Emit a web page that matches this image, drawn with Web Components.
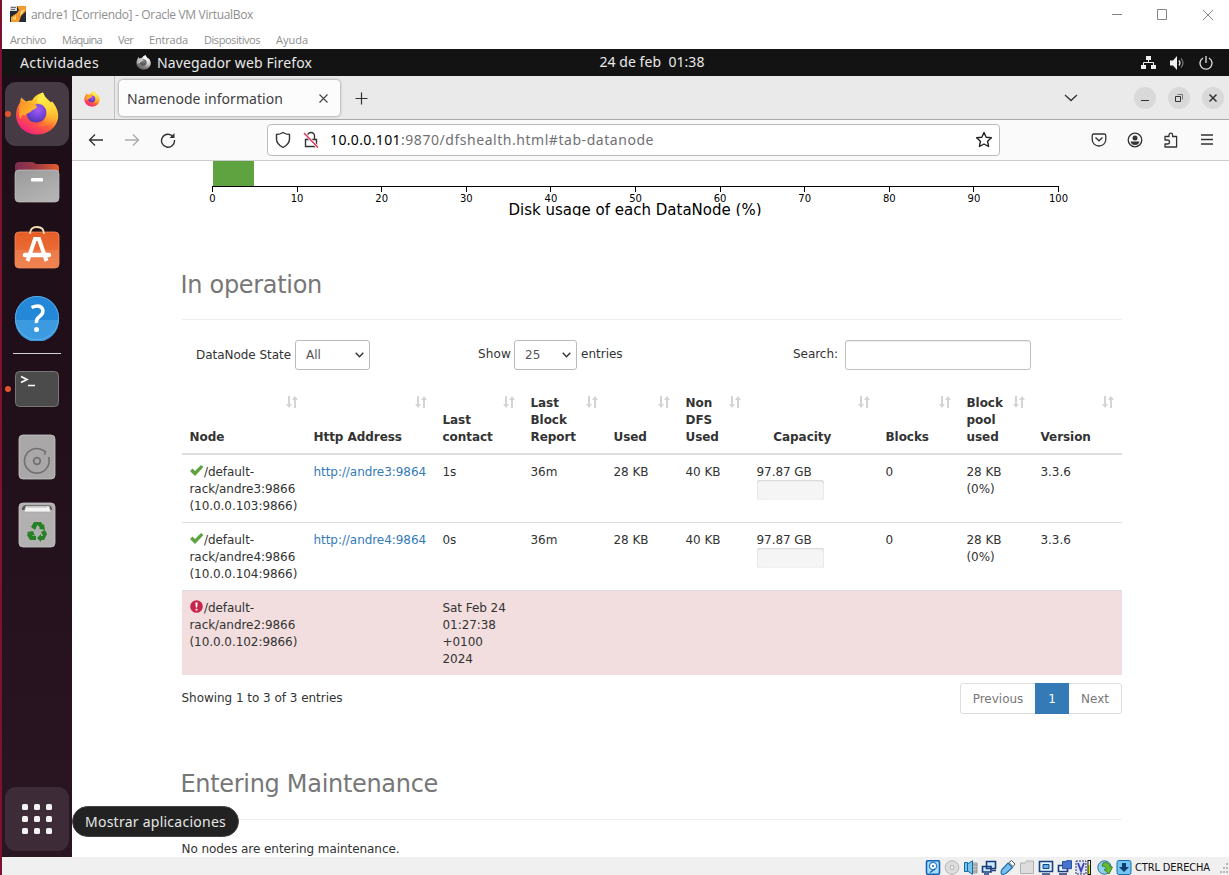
<!DOCTYPE html>
<html lang="es">
<head>
<meta charset="utf-8">
<title>andre1 [Corriendo] - Oracle VM VirtualBox</title>
<style>
html,body{margin:0;height:100%;overflow:hidden}
body{font-family:"Noto Sans",sans-serif;background:#fff}
</style>
</head>
<body>
<vm-window></vm-window>
<script>
const define = (tag, css, html, setup) => customElements.define(tag, class extends HTMLElement {
  connectedCallback() {
    if (this.shadowRoot) return;
    const root = this.attachShadow({mode: "open"});
    const t = document.createElement("template");
    t.innerHTML = `<style>:host,*{box-sizing:border-box}svg{display:block;flex:none}${css}</style>${typeof html === "function" ? html(this) : html}`;
    root.append(document.importNode(t.content, true));
    if (setup) setup(this, root);
  }
});

/* Text whose tracking is tuned to a given advance width */
define("fit-text", `:host{display:inline-block;white-space:pre;letter-spacing:0}span{display:inline-block}`, `<span><slot></slot></span>`, (el, root) => {
  const w = parseFloat(el.getAttribute("w"));
  const now = root.querySelector("span").getBoundingClientRect().width;
  if (w && now) el.style.letterSpacing = ((w - now) / el.textContent.length).toFixed(3) + "px";
  if (w) el.style.width = w + "px";
});

define("firefox-logo", `:host{display:block;flex:none}:host([mono]){filter:grayscale(1) brightness(1.1)}svg{width:100%;height:100%}`, `
<svg viewBox="0 0 44 44">
<defs>
<linearGradient id="a" x1=".8" y1=".1" x2=".25" y2=".95"><stop offset="0" stop-color="#fff04a"/><stop offset=".35" stop-color="#ffb52b"/><stop offset=".62" stop-color="#ff5f38"/><stop offset="1" stop-color="#f5227e"/></linearGradient>
<radialGradient id="b" cx=".55" cy=".3" r=".75"><stop offset="0" stop-color="#a65cf2"/><stop offset=".6" stop-color="#7042d8"/><stop offset="1" stop-color="#4a34a8"/></radialGradient>
<linearGradient id="c" x1=".5" y1="0" x2=".6" y2="1"><stop offset="0" stop-color="#fff44f"/><stop offset=".5" stop-color="#ffd53a"/><stop offset="1" stop-color="#ff9a2c" stop-opacity=".2"/></linearGradient>
<linearGradient id="d" x1="0" y1="0" x2="1" y2=".6"><stop offset="0" stop-color="#ff8a24"/><stop offset="1" stop-color="#ffbf30"/></linearGradient>
</defs>
<path fill="url(#a)" d="M28 1c1 4 5 7 8 10l1-1c4 5 7 10 6 17-2 10-11 16-21 16C10 43 1 34 1 23c0-5 2-9 4-12l1-5 5 4c2-1 4-1 6-1 3-5 7-7 11-8z"/>
<path fill="url(#b)" d="M12 21c2-6 9-10 14-8 5 1 6 5 5 11-2 5-6 7-10 7-6 0-10-5-9-10z"/>
<path fill="url(#c)" d="M28 1c-4 3-6 7-6 10 5 1 9 5 10 10 0 8-5 12-10 13 10 3 19-4 20-12 0-5-2-9-5-12l-1 2C33 9 29 5 28 1z"/>
<path fill="url(#d)" d="M6 6c0 3 0 5 2 6 3-2 6-1 8 1 2 0 5 0 6 2-1 3-5 3-6 5-2 2-4 1-6 4-3-2-4 1-4 4-3-3-3-12 0-17z"/>
</svg>`);

define("win-title", `:host{display:flex;height:29px;align-items:center;padding:0 14px 0 7px;color:#8e8e8e;font:12px/16px "Open Sans",sans-serif}
.t{margin-left:4px}.c{margin-left:auto}`, `
<svg width="18" height="17"><rect x="1" width="16" height="16" fill="#252a36"/><path d="M8 0h9v5l-5 5-2 6H2v-5l6-4 2-3z" fill="#f59b2e"/><path d="m12 5 4-2-5 7z" fill="#ffe08a"/><path d="M7 9 3 13l4 1z" fill="#ffd06b"/><rect x="1" y="0" width="7" height="5" fill="#d8dadd"/><path d="M2 1.500h5M2 3.500h4" stroke="#69707c"/></svg>
<fit-text class="t" w="222">andre1 [Corriendo] - Oracle VM VirtualBox</fit-text>
<svg class="c" width="104" height="14" fill="none" stroke="#858585"><path d="M1 6.500h10M46.500 1.500h9v10h-9zM92 2l10 10M102 2 92 12"/></svg>`);

define("win-menu", `:host{display:flex;height:20px;align-items:center;padding:0 0 0 8px;gap:16px;color:#8e8e8e;font:11px/15px "Open Sans",sans-serif}`, `
<fit-text w="36">Archivo</fit-text><fit-text w="40">Máquina</fit-text><fit-text w="15">Ver</fit-text><fit-text w="39">Entrada</fit-text><fit-text w="56">Dispositivos</fit-text><fit-text w="32">Ayuda</fit-text>`);

define("gnome-bar", `:host{display:grid;grid-template-columns:1fr 104px 1fr;height:27px;align-items:center;background:#131313;color:#e9e9e9;font:14px/20px "Noto Sans",sans-serif;padding:0 16px 0 18px}
div{display:flex;align-items:center}.l{width:300px}.l firefox-logo{width:15px;height:15px;margin:0 6px 0 37px}.r{justify-content:flex-end;gap:14px}.mid{margin-left:35px;flex:none}:host{grid-template-columns:minmax(0,1fr) 104px minmax(0,1fr)}.l,.mid{margin-top:-1px}.l{margin-top:0}`, `
<div class="l"><fit-text w="79">Actividades</fit-text><firefox-logo mono></firefox-logo><fit-text w="155">Navegador web Firefox</fit-text></div>
<div><fit-text class="mid" style="margin-left:0" w="105">24 de feb  01:38</fit-text></div>
<div class="r">
<svg width="15" height="14" fill="#eee"><path d="M5 0h5v4H5zM0 9h5v4H0zM10 9h5v4h-5z"/><path d="M7.500 4v3M2.500 9V6.500h10V9" fill="none" stroke="#eee"/></svg>
<svg width="15" height="14"><path fill="#eee" d="M0 4.500h3L7 0v14L3 9.500H0z"/><path d="M9 4.500q2 2.500 0 5" fill="none" stroke="#ddd" stroke-width="1.300"/><path d="M11 2.500q4 4.500 0 9" fill="none" stroke="#777" stroke-width="1.200"/></svg>
<svg width="14" height="14" fill="none" stroke="#e3e3e3" stroke-width="1.300"><path d="M4 2a6 6 0 1 0 6 0M7 0v7"/></svg></div>`, (el, root) => {
  root.querySelector(".mid").style.marginLeft = "35px";
});

define("dock-item", `:host{display:flex;width:64px;height:64px;flex:none;align-items:center;justify-content:center;position:relative;border-radius:11px}
:host([active]){background:#463b44}:host([apps]){background:#3e2b38}
i{position:absolute;left:0;top:29px;width:6px;height:6px;border-radius:3px;background:#e2552a}:host(:not([running])) i{display:none}`, `<i></i><slot></slot>`);

define("gnome-dock", `:host{display:flex;flex-direction:column;align-items:center;width:70px;flex:none;padding:6px 0;gap:4px;background:linear-gradient(#1c0e16,#210f1a 45%,#26131f 75%,#2a1622)}
hr{width:48px;height:1px;border:0;background:#d5d0d3;margin:-1px 0}firefox-logo{width:44px;height:45px;margin-bottom:2px}.apps{margin-top:auto}.bag{margin-bottom:6px}`, `
<dock-item active running><firefox-logo></firefox-logo></dock-item>
<dock-item><svg width="46" height="42" viewBox="0 0 46 42"><defs><linearGradient id="f"><stop stop-color="#7b2d51"/><stop offset=".5" stop-color="#a13a43"/><stop offset="1" stop-color="#e65f2b"/></linearGradient><linearGradient id="g" x2=".6" y2="1"><stop stop-color="#9a9a9a"/><stop offset="1" stop-color="#b3b3b3"/></linearGradient></defs><path fill="url(#f)" d="M1 5q0-4 4-4h13q2 0 4 2h19q4 0 4 4v8H1z"/><rect x="1" y="9" width="44" height="32" rx="4" fill="url(#g)" stroke="#c2c2c2" stroke-width=".7"/><rect x="17" y="17" width="12" height="3.500" rx="1" fill="#fff"/></svg></dock-item>
<dock-item><svg class="bag" width="46" height="44" viewBox="0 0 46 44"><defs><linearGradient id="s" y2="1" x2="0"><stop stop-color="#e75e27"/><stop offset=".5" stop-color="#ea6b34"/><stop offset=".5" stop-color="#ed7a48"/><stop offset="1" stop-color="#ee8452"/></linearGradient></defs><rect x="1" y="7" width="44" height="36" rx="4" fill="url(#s)" stroke="#f38b5e" stroke-width=".8"/><path d="M16 9q0-7 7-7t7 7" fill="none" stroke="#f7ddb7" stroke-width="1.800"/><path d="m13.500 36 7.500-22h4l7.500 22" fill="none" stroke="#fff" stroke-width="4"/><path d="M11 30h24" stroke="#fff" stroke-width="4.500" stroke-linecap="round"/></svg></dock-item>
<dock-item><svg width="46" height="46" viewBox="0 0 46 46"><circle cx="23" cy="23" r="22" fill="#2587d8"/><path d="M1 25a22 22 0 0 0 44 0z" fill="#3c9be0"/><circle cx="23" cy="23" r="21.600" fill="none" stroke="#66b4ea" stroke-width=".8"/><path d="M17.500 12.500q10-4 11.500 3 0 4-4 6.500-3 2-2.500 6" fill="none" stroke="#fff" stroke-width="3.400"/><circle cx="22.500" cy="34.500" r="2.500" fill="#fff"/></svg></dock-item>
<hr>
<dock-item running><svg width="46" height="38" viewBox="0 0 46 38"><rect x="1.500" y="1.500" width="43" height="35" rx="4" fill="#4b4b4b" stroke="#777"/><path d="m7 6.500 6 3-6 3M14 15.500h7" fill="none" stroke="#fff" stroke-width="1.700"/></svg></dock-item>
<dock-item><svg width="38" height="46" viewBox="0 0 38 46"><rect x="1" y="1" width="36" height="44" rx="4" fill="#aaa7a8" stroke="#c8c6c7" stroke-width=".8"/><path d="M30.500 23A12.300 12.300 0 1 1 25 16.200l2.500 1.500-1 3" fill="none" stroke="#737072" stroke-width="1.600"/><circle cx="19" cy="27" r="3.300" fill="none" stroke="#737072" stroke-width="1.800"/></svg></dock-item>
<dock-item><svg width="38" height="46" viewBox="0 0 38 46"><rect x="1" y="1" width="36" height="44" rx="4" fill="#b3b0b1" stroke="#c8c6c7" stroke-width=".8"/><path d="M4 8q0-5 5-5h20q5 0 5 5z" fill="#555"/><path d="m6 10 2-6h23l2 6zM9 5h20" fill="#f3f3f3" stroke="#aaa" stroke-width=".8"/><g fill="#268026"><path d="m13 25 3-5h5l-4 8z"/><path d="m21 20 2 0 2 3 1-1 1 6-6-1 1-1-3-4z"/><path d="m23 30 4-2 2 4-3 6h-3v2l-4-4 4-4v2h2z"/><path d="M18 38h-6l-3-5 1-2-1-1 6-1 2 5-2-1-1 1h4z"/></g></svg></dock-item>
<dock-item apps class="apps"><svg width="30" height="30" fill="#f4f1f3"><g id="r"><rect width="6" height="6" rx="1.500"/><rect x="12" width="6" height="6" rx="1.500"/><rect x="24" width="6" height="6" rx="1.500"/></g><use href="#r" y="12"/><use href="#r" y="24"/></svg></dock-item>`);

define("ff-tabs", `:host{display:flex;height:44px;align-items:center;background:#eaeaea;border-bottom:1px solid #a9a9a9;color:#3e3e42;font:14px/20px "Noto Sans",sans-serif}
.pin{width:43px;height:43px;border-right:1px solid #c2c2c2;display:flex;align-items:center;padding:2px 0 0 12px}.pin firefox-logo{width:16px;height:16px}
.tab{width:221px;height:36px;margin:1px 0 0 4px;border-radius:4px;background:#fcfcfc;box-shadow:0 0 3px rgba(0,0,0,.45);display:flex;align-items:center;justify-content:space-between;padding:1px 12px 0 8px}
.plus{margin:2px 0 0 15px}.ch{margin:0 56px 0 auto}.w{display:flex;gap:12px;margin:1px 5px 0 0}.w svg{border-radius:11px;background:#d9d9d9}`, `
<div class="pin"><firefox-logo></firefox-logo></div>
<div class="tab"><fit-text w="156">Namenode information</fit-text><svg width="9" height="9" stroke="#444" stroke-width="1.100"><path d="m.5.5 8 8M8.500.5l-8 8"/></svg></div>
<svg class="plus" width="13" height="13" stroke="#333" stroke-width="1.200"><path d="M6.500.5v12M.5 6.500h12"/></svg>
<svg class="ch" width="14" height="8" fill="none" stroke="#333" stroke-width="1.300"><path d="m1 1 6 5.500L13 1"/></svg>
<div class="w"><svg width="22" height="22" stroke="#333"><path d="M7 13.500h8"/></svg><svg width="22" height="22" fill="none" stroke="#333"><path d="M7.500 9.500h5v5h-5z"/><path d="M9.500 7.500h5v5" stroke="#777"/></svg><svg width="22" height="22" stroke="#333" stroke-width="1.500"><path d="m7.500 7.500 7 7m0-7-7 7"/></svg></div>`);

define("ff-toolbar", `:host{display:flex;height:41px;align-items:center;background:#fafafa;border-bottom:1px solid #ccc;padding:0 14px 0 16px;color:#000;font:14px/20px "Noto Sans",sans-serif}
.nav{display:flex;gap:20px;width:179px}.url{width:733px;height:32px;border:1px solid #bcbcbc;border-radius:4px;background:#fff;display:flex;align-items:center;padding:0 6px 0 7px}
.lock{margin:0 11px 0 12px}.g{color:#707074}.star{margin-left:auto}.r{display:flex;gap:20px;margin-left:auto}`, `
<div class="nav">
<svg width="16" height="16" fill="none" stroke="#333" stroke-width="1.300"><path d="M15 8H1.500M7 2.500 1.500 8 7 13.500"/></svg>
<svg width="16" height="16" fill="none" stroke="#aaa" stroke-width="1.300"><path d="M1 8h13.500M9 2.500 14.500 8 9 13.500"/></svg>
<svg width="16" height="16" fill="none" stroke="#333" stroke-width="1.400"><path d="M13 4.500A6.500 6.500 0 1 0 14.500 8"/><path d="M14.500 1v5h-5z" fill="#333" stroke="none"/></svg></div>
<div class="url">
<svg width="16" height="18" fill="none" stroke="#333" stroke-width="1.400"><path d="M8 1.500q3 2 6.500 2V8q0 5-6.500 8.500Q1.500 13 1.500 8V3.500q3.500 0 6.500-2z"/></svg>
<svg class="lock" width="16" height="18" fill="none" stroke="#333" stroke-width="1.400"><path d="M2.500 8.500h11v7h-11zM4.500 8.500V5a3.500 3.500 0 0 1 7 0v3.500"/><path d="m1 2 14 14.500" stroke="#fff" stroke-width="3"/><path d="m1 2 14 14.500" stroke="#e22850" stroke-width="1.300"/></svg>
<fit-text w="71">10.0.0.101</fit-text><fit-text class="g" w="253">:9870/dfshealth.html#tab-datanode</fit-text>
<svg class="star" width="18" height="18" fill="none" stroke="#222" stroke-width="1.400" stroke-linejoin="round"><path d="m9 1.500 2.200 4.700 5.200.6-3.800 3.500 1 5.200L9 13l-4.600 2.500 1-5.200L1.600 6.800l5.200-.6z"/></svg></div>
<div class="r">
<svg width="16" height="16" fill="none" stroke="#333" stroke-width="1.300"><path d="M3 2h10q1.800 0 1.800 1.800V7.500a6.800 6.500 0 0 1-13.600 0V3.800Q1.200 2 3 2z"/><path d="m4.500 5.500 3.500 3.300 3.500-3.300"/></svg>
<svg width="16" height="16"><circle cx="8" cy="8" r="6.800" fill="none" stroke="#333" stroke-width="1.300"/><circle cx="8" cy="6" r="2.500" fill="#333"/><path d="M3.500 9.500h9q-1 3.500-4.500 3.500t-4.500-3.500" fill="#333"/></svg>
<svg width="16" height="16" fill="none" stroke="#333" stroke-width="1.300" stroke-linejoin="round"><path d="M2 6.500V4.500h4V3a1.800 1.800 0 0 1 3.600 0v1.500h4V15H2v-3h2.500a1.500 1.500 0 0 0 0-4H2z"/></svg>
<svg width="16" height="16" stroke="#333" stroke-width="1.400"><path d="M2 3h12M2 7.500h12M2 12h12"/></svg></div>`);

define("usage-chart", `:host{display:block;height:55px;overflow:hidden}text{font-family:"DejaVu Sans",sans-serif;fill:#000;text-anchor:middle}`, () => {
  let s = "";
  for (let i = 0; i <= 10; i++) { const x = 30.5 + i * 84.6; s += `<path d="M${Math.round(x - .5) + .5} 25v6" stroke="#000"/><text x="${x}" y="41" font-size="10">${i * 10}</text>`; }
  return `<svg width="940" height="55"><rect x="31" width="41" height="25" fill="#5fa341"/><path d="M30 25.500h847" stroke="#000"/>${s}<text x="453" y="54" font-size="15" textLength="253">Disk usage of each DataNode (%)</text></svg>`;
});

define("page-heading", `:host{display:block;height:51px;border-bottom:1px solid #eee;color:#777;font:24px/26px "DejaVu Sans",sans-serif;margin-bottom:20px;padding-top:3px}:host([low]){padding-top:2px}`, `<slot></slot>`);

define("select-box", `:host{display:inline-flex;height:30px;border:1px solid #bbb;border-radius:3px;align-items:center;justify-content:space-between;padding:0 5px 0 10px;background:#fff;color:#555}`, `<slot></slot><svg width="9" height="6" fill="none" stroke="#333" stroke-width="1.400"><path d="m.7.700 3.800 4L8.300.700"/></svg>`);

define("table-controls", `:host{display:flex;height:30px;align-items:center}label{display:flex;align-items:center}span,.s{margin-bottom:2px}.a{margin-left:14px;width:282px}.b{width:315px}.a select-box{width:75px;margin-left:4px}.b select-box{width:63px;margin:0 4px 0 3px}i{width:186px;height:30px;border:1px solid #c0c0c0;border-radius:3px;margin-left:7px;box-shadow:inset 0 1px 1px #eee}`, `
<label class="a"><fit-text w="95">DataNode State</fit-text><select-box>All</select-box></label>
<label class="b"><fit-text class="s" w="33">Show</fit-text><select-box>25</select-box><span>entries</span></label>
<label><fit-text class="s" w="45">Search:</fit-text><i></i></label>`);

define("sort-mark", `:host{position:absolute;right:8px;top:10px}`, `<svg width="12" height="12" fill="#d4d4d4"><path d="M2 0h2v8h2l-3 4-3-4h2zM8 12h2V4h2L9 0 6 4h2z"/></svg>`);
define("state-ok", `:host{display:inline-block;vertical-align:0;width:14.500px;height:11px}`, `<svg width="14" height="12"><path d="m0 6 2.500-2.500L5 6l6-6 2.500 2L5 11z" fill="#5fa341"/></svg>`);
define("state-down", `:host{display:inline-block;vertical-align:0;width:14.500px;height:12px}`, `<svg width="14" height="13"><circle cx="6.500" cy="6.500" r="6.300" fill="#c7254e"/><path d="M5.300 2.500h2.400L7.200 7.500H5.800zM5.600 8.700h1.800v1.800H5.600z" fill="#fff"/></svg>`);
define("capacity-bar", `:host{display:block;margin-top:-1px;width:67px;height:20px;border-radius:3px;background:#f5f5f5;box-shadow:inset 0 1px 2px rgba(0,0,0,.12), inset 0 0 1px rgba(0,0,0,.15)}`, ``);

define("node-table", `:host{display:block;margin-top:16px;letter-spacing:-.06px}table{width:940px;border-collapse:separate;border-spacing:0;table-layout:fixed}
th{height:69px;position:relative;text-align:left;vertical-align:bottom;padding:8px 24px 7px 7.500px;font-weight:bold;font-size:12px;border-bottom:2px solid #ddd}
th.c{text-align:center;padding-right:30px}td{padding:9px 0 7px 7.500px;vertical-align:top;border-top:1px solid #ddd}tr.first td{border-top:0;height:67px}.n td{height:68px}tr.dead td{background:#f2dede;height:85px}a{color:#337ab7}`, () => {
  const cols = [124,129,88,83,72,71,129,81,74,89], heads = ["Node","Http Address","Last<br>contact","Last<br>Block<br>Report","Used","Non<br>DFS<br>Used","Capacity","Blocks","Block<br>pool<br>used","Version"];
  const live = (n, t, c) => `<tr class="${c}"><td><state-ok></state-ok>/default-<br>rack/andre${n}:9866<br>(10.0.0.10${n}:9866)</td><td><a>http://andre${n}:9864</a></td><td>${t}</td><td>36m</td><td>28 KB</td><td>40 KB</td><td>97.87 GB<capacity-bar></capacity-bar></td><td>0</td><td>28 KB<br>(0%)</td><td>3.3.6</td></tr>`;
  return `<table><colgroup>${cols.map(w => `<col style="width:${w}px">`).join("")}</colgroup><thead><tr>${heads.map((h, i) => `<th${i === 6 ? ' class="c"' : ""}>${h}<sort-mark></sort-mark></th>`).join("")}</tr></thead><tbody>${live(3, "1s", "first")}${live(4, "0s", "n")}<tr class="dead"><td><state-down></state-down>/default-<br>rack/andre2:9866<br>(10.0.0.102:9866)</td><td></td><td>Sat Feb 24<br>01:27:38<br>+0100<br>2024</td><td></td><td></td><td></td><td></td><td></td><td></td><td></td></tr></tbody></table>`;
});

define("table-footer", `:host{display:flex;justify-content:space-between;margin-top:8px;height:31px;margin-bottom:55px}.s{padding-top:7px;margin-left:-.5px}
.p{display:flex;height:31px;border:1px solid #ddd;border-radius:3px;color:#777;line-height:30px;text-align:center}.p span{width:74px}.p b{font-weight:normal;width:34px;background:#337ab7;color:#fff;margin:-1px 0;line-height:32px;height:31px}.p span+b+span{width:52px}`, `
<div class="s"><fit-text w="161">Showing 1 to 3 of 3 entries</fit-text></div><div class="p"><span>Previous</span><b>1</b><span>Next</span></div>`);

define("hdfs-page", `:host{display:block;flex:1;overflow:hidden;background:#fff;padding-left:110px;color:#333;font:12px/17px "DejaVu Sans",sans-serif}main{width:940px}usage-chart{margin-bottom:53px}.e{margin:21px 0 0 -.5px}page-heading{text-indent:-.5px}`, `
<main><usage-chart></usage-chart>
<page-heading><fit-text w="141">In operation</fit-text></page-heading>
<table-controls></table-controls><node-table></node-table><table-footer></table-footer>
<page-heading low><fit-text w="257">Entering Maintenance</fit-text></page-heading>
<div class="e"><fit-text w="218">No nodes are entering maintenance.</fit-text></div></main>`);

define("ff-window", `:host{display:flex;flex-direction:column;flex:1;min-width:0}`, `<ff-tabs></ff-tabs><ff-toolbar></ff-toolbar><hdfs-page></hdfs-page>`);

define("dock-tip", `:host{position:absolute;left:72px;top:806px;width:167px;height:31px;border-radius:16px;background:#222;border:1px solid #444;color:#e6e6e6;font:14px/29px "Noto Sans",sans-serif;padding-left:12px}`, el => `<fit-text w="141">${el.textContent}</fit-text>`);

define("vm-status", `:host{display:flex;height:18px;align-items:center;justify-content:flex-end;background:#f0f0f0;color:#111;font:11px/14px "DejaVu Sans Condensed","DejaVu Sans",sans-serif;padding:3px 0 0}
.i{display:flex;gap:2.800px}fit-text{margin:1px 9px 0 3px}`, `
<div class="i" >
<svg width="16" height="15"><rect x="1.500" y=".7" width="13" height="13.600" rx="1.500" fill="#a9dcff" stroke="#1467b5" stroke-width="1.600"/><circle cx="8" cy="6" r="3.600" fill="#fff" stroke="#2a83cc" stroke-width="1.300"/><circle cx="8" cy="6" r="1" fill="#1467b5"/><path d="m5 12.500 5-3.500" stroke="#1467b5" stroke-width="1.500"/></svg>
<svg width="16" height="15"><circle cx="8" cy="7.500" r="6.800" fill="#ddd" stroke="#b4b4b4"/><circle cx="8" cy="7.500" r="2" fill="#f5f5f5" stroke="#aaa"/></svg>
<svg width="16" height="15"><path d="M8 3h6v10H8" fill="#ccc" stroke="#999"/><path d="M10 5h4M10 8h4M10 11h4" stroke="#888"/><path d="M1.500 2.500h3v9h-3zM4.500 4 9.500.8v13.500l-5-3.300z" fill="#76c4ee" stroke="#126aa6"/></svg>
<svg width="16" height="15"><path d="M5.500 1.500h9v7h-9zM1.500 6.500h8.500v5.500H1.500zM3 14h5M11 10.500h4" fill="#cde9ff" stroke="#173d7b" stroke-width="1.600"/></svg>
<svg width="16" height="15"><path d="m2 9.500 6-6.500 4.500 4.500-6 5.500q-3 2-5 1-1-2 .5-4.500z" fill="#77c0f1" stroke="#236ea9" stroke-width="1.200"/><path d="m9 2.500 2.500-2L15 4l-2 2.500z" fill="#fff" stroke="#456"/></svg>
<svg width="16" height="15"><path d="M1.500 13.500V3h5l1-2h7v12.500z" fill="#ddd" stroke="#b0b0b0"/></svg>
<svg width="16" height="15"><path d="M1.500 1.500h13v10h-13zM4 14h8" fill="#e5f5ff" stroke="#17427d" stroke-width="1.600"/><path d="M5 4.500h6v4H5z" fill="#62b0ec" stroke="#17427d"/></svg>
<svg width="16" height="15"><path d="M1.500 5.500h9v6h-9zM2 14h8" fill="#f5f8ff" stroke="#173d7b" stroke-width="1.600"/><path d="M5.500 1.500h4V.7h5v8h-9z" fill="#4775ce" stroke="#2c53a1"/></svg>
<svg width="19" height="15"><path d="M1 1h10v13H1z" fill="#dce5ff" stroke="#335" stroke-dasharray="2 1"/><path d="m3 3 3 8 3-8" fill="none" stroke="#3e42b5" stroke-width="1.900"/><path d="M12.500 0h3.500v15h-3.500z" fill="#111"/><path d="M13.500 1h1.500v4h-1.500z" fill="#fff"/><path d="M13.500 5h1.500v9h-1.500z" fill="#ceea22"/></svg>
<svg width="16" height="15"><circle cx="7.500" cy="7.500" r="6.700" fill="#8fd0f0" stroke="#33719c"/><path d="M6 3q6-2 7 4l2.500 0-3.500 7-5-4.500 2.500-.5Q9 6 5 6z" fill="#65bd2d" stroke="#32731c" stroke-width=".8"/></svg>
<svg width="16" height="15"><rect x="1" y=".5" width="14" height="14" rx="2" fill="#75c5f3" stroke="#176da9"/><path d="M6 3h4v4h3l-5 5-5-5h3z" fill="#113e72"/></svg>
</div><fit-text w="75">CTRL DERECHA</fit-text>
<svg width="10" height="12" fill="#b8b8b8"><path d="M7 1h2v2H7zM4 5h2v2H4zM7 5h2v2H7zM1 9h2v2H1zM4 9h2v2H4zM7 9h2v2H7z"/></svg>`);

define("vm-window", `:host{display:flex;flex-direction:column;width:1229px;height:875px;position:relative;border-left:2px solid #7c1230;background:#fff;overflow:hidden}.d{display:flex;height:781px}dock-tip{margin-left:-2px}`, `
<win-title></win-title><win-menu></win-menu><gnome-bar></gnome-bar>
<div class="d"><gnome-dock></gnome-dock><ff-window></ff-window></div>
<vm-status></vm-status><dock-tip>Mostrar aplicaciones</dock-tip>`);
</script>
</body>
</html>
